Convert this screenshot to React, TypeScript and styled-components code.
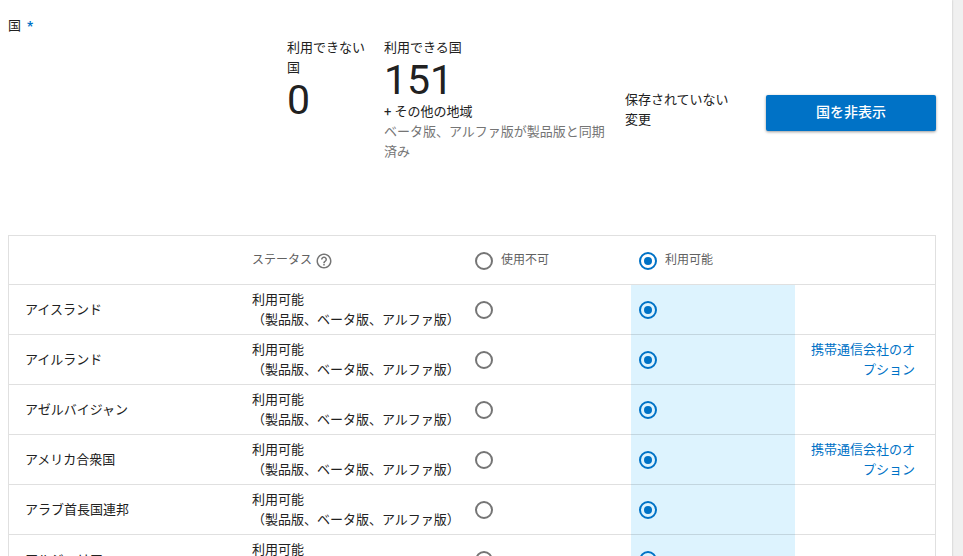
import React, { useState } from 'react';
import styled, { createGlobalStyle, css } from 'styled-components';
import { MdHelpOutline } from 'react-icons/md';

const colors = {
  text: '#212121',
  muted: '#757575',
  heading: '#616161',
  accent: '#0072c6',
  selected: '#ddf3fe',
  line: 'rgba(0, 0, 0, 0.12)',
};

const GlobalStyle = createGlobalStyle`
  *, *::before, *::after { box-sizing: border-box; }
  body {
    margin: 0;
    background: #f0f0f0;
    color: ${colors.text};
    font: 400 13px/20px Roboto, 'Noto Sans CJK JP', sans-serif;
  }
`;

const Page = styled.div`
  padding-right: 11px;
`;

const Panel = styled.main`
  min-height: 100vh;
  padding: 16px 16px 16px 8px;
  background: #fff;
  box-shadow: 0 0 2px rgba(0, 0, 0, 0.24);
`;

const Header = styled.header`
  display: flex;
  align-items: flex-start;
  margin-bottom: 73px;
`;

const FieldLabel = styled.h1`
  flex: 1;
  margin: 0;
  font: inherit;
`;

const Required = styled.span`
  margin-left: 6px;
  color: ${colors.accent};
  font-weight: 900;
`;

const Summary = styled.div`
  display: flex;
  align-items: flex-start;
  gap: 16px;
  padding-top: 22px;
`;

const Stat = styled.section<{ $wide?: boolean }>`
  width: ${({ $wide }) => ($wide ? 225 : 81)}px;
`;

const Line = styled.p<{ $muted?: boolean }>`
  margin: 0;
  ${({ $muted }) => $muted && css`color: ${colors.muted};`}
`;

const Figure = styled.div`
  font-size: 41px;
  line-height: 44px;
`;

const Actions = styled.div`
  display: flex;
  align-items: flex-start;
  gap: 32px;
  padding-top: 52px;
`;

const Unsaved = styled.p`
  width: 109px;
  margin: 0;
`;

const PrimaryButton = styled.button`
  width: 170px;
  height: 36px;
  margin-top: 5px;
  padding: 0 16px 2px;
  border: 0;
  border-radius: 2px;
  background: ${colors.accent};
  box-shadow: 0 1px 3px rgba(0, 0, 0, 0.4);
  color: #fff;
  font: 500 14px/20px Roboto, 'Noto Sans CJK JP', sans-serif;
  cursor: pointer;
`;

const Table = styled.table`
  width: 100%;
  table-layout: fixed;
  border: 1px solid ${colors.line};
  border-spacing: 0;
`;

const Col = styled.col<{ $width?: number }>`
  width: ${({ $width }) => ($width ? `${$width}px` : 'auto')};
`;

const cell = css`
  padding: 4px 0 4px 16px;
  border-bottom: 1px solid ${colors.line};
  font-weight: 400;
  text-align: left;
`;

const HeadCell = styled.th<{ $radio?: boolean }>`
  ${cell}
  height: 49px;
  color: ${colors.heading};
  font-size: 12px;
  ${({ $radio }) => $radio && css`padding-left: 8px;`}
`;

const NameCell = styled.th`
  ${cell}
`;

const Cell = styled.td`
  ${cell}
  height: 50px;
`;

const RadioCell = styled(Cell)<{ $selected?: boolean }>`
  padding-left: 8px;
  background: ${({ $selected }) => ($selected ? colors.selected : 'transparent')};
`;

const LinkCell = styled(Cell)`
  padding-right: 20px;
  text-align: right;
`;

const OptionLink = styled.a`
  color: ${colors.accent};
  text-decoration: none;
`;

const Radio = styled.input.attrs({ type: 'radio' })`
  appearance: none;
  display: block;
  flex: none;
  width: 18px;
  height: 18px;
  margin: 1px 0 0;
  padding: 3px;
  border: 2px solid ${colors.muted};
  border-radius: 50%;
  cursor: pointer;

  &:checked {
    border-color: ${colors.accent};
    background: ${colors.accent} content-box;
  }
`;

const RadioLabel = styled.label`
  display: flex;
  gap: 8px;

  ${Radio} {
    margin-top: 2px;
  }
`;

const StatusHeading = styled.div`
  display: flex;
  gap: 3px;
`;

const HelpButton = styled.button`
  display: block;
  height: 20px;
  padding: 2px 0 0;
  border: 0;
  background: none;
  color: ${colors.muted};
  cursor: pointer;

  svg {
    display: block;
  }
`;

type Choice = 'off' | 'on';

const countries = [
  { name: 'アイスランド' },
  { name: 'アイルランド', carriers: true },
  { name: 'アゼルバイジャン' },
  { name: 'アメリカ合衆国', carriers: true },
  { name: 'アラブ首長国連邦' },
  { name: 'アルジェリア' },
];

export default function App() {
  const [choices, setChoices] = useState<Choice[]>(countries.map(() => 'on'));
  const all = (value: Choice) => choices.every((c) => c === value);
  const setAll = (value: Choice) => setChoices(countries.map(() => value));
  const setOne = (index: number, value: Choice) =>
    setChoices(choices.map((c, i) => (i === index ? value : c)));

  return (
    <Page>
      <GlobalStyle />
      <Panel>
        <Header>
          <FieldLabel>
            国<Required>*</Required>
          </FieldLabel>
          <Summary>
            <Stat>
              <Line>利用できない国</Line>
              <Figure>0</Figure>
            </Stat>
            <Stat $wide>
              <Line>利用できる国</Line>
              <Figure>151</Figure>
              <Line>+ その他の地域</Line>
              <Line $muted>ベータ版、アルファ版が製品版と同期済み</Line>
            </Stat>
            <Actions>
              <Unsaved>保存されていない変更</Unsaved>
              <PrimaryButton type="button">国を非表示</PrimaryButton>
            </Actions>
          </Summary>
        </Header>
        <Table>
          <colgroup>
            <Col />
            <Col $width={231} />
            <Col $width={164} />
            <Col $width={164} />
            <Col $width={140} />
          </colgroup>
          <thead>
            <tr>
              <HeadCell />
              <HeadCell scope="col">
                <StatusHeading>
                  ステータス
                  <HelpButton type="button" aria-label="ヘルプ">
                    <MdHelpOutline size={18} />
                  </HelpButton>
                </StatusHeading>
              </HeadCell>
              <HeadCell scope="col" $radio>
                <RadioLabel>
                  <Radio name="all" checked={all('off')} onChange={() => setAll('off')} />
                  使用不可
                </RadioLabel>
              </HeadCell>
              <HeadCell scope="col" $radio>
                <RadioLabel>
                  <Radio name="all" checked={all('on')} onChange={() => setAll('on')} />
                  利用可能
                </RadioLabel>
              </HeadCell>
              <HeadCell />
            </tr>
          </thead>
          <tbody>
            {countries.map(({ name, carriers }, i) => (
              <tr key={name}>
                <NameCell scope="row">{name}</NameCell>
                <Cell>
                  利用可能
                  <br />
                  （製品版、ベータ版、アルファ版）
                </Cell>
                <RadioCell $selected={choices[i] === 'off'}>
                  <Radio
                    name={name}
                    aria-label={`${name} 使用不可`}
                    checked={choices[i] === 'off'}
                    onChange={() => setOne(i, 'off')}
                  />
                </RadioCell>
                <RadioCell $selected={choices[i] === 'on'}>
                  <Radio
                    name={name}
                    aria-label={`${name} 利用可能`}
                    checked={choices[i] === 'on'}
                    onChange={() => setOne(i, 'on')}
                  />
                </RadioCell>
                <LinkCell>
                  {carriers && <OptionLink href="#carriers">携帯通信会社のオプション</OptionLink>}
                </LinkCell>
              </tr>
            ))}
          </tbody>
        </Table>
      </Panel>
    </Page>
  );
}
